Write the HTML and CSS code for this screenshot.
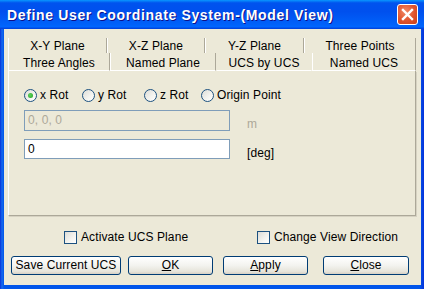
FILE: index.html
```html
<!DOCTYPE html>
<html lang="en">
<head>
  <meta charset="UTF-8" />
  <title>Define User Coordinate System</title>
  <link rel="stylesheet" href="styles.css">
</head>
<body>
  <div class="window">
    <div class="titlebar">
      <span class="title">Define User Coordinate System-(Model View)</span>
      <span class="close-x">
        <svg width="13" height="13" viewBox="0 0 13 13"><path d="M2 2 L11 11 M11 2 L2 11" stroke="#fff" stroke-width="2.4" stroke-linecap="square"/></svg>
      </span>
    </div>

    <div class="client">
      <!-- Onglets sur deux rangées -->
      <div class="tabs">
        <div class="tab-row back">
          <div class="tab">X-Y Plane</div>
          <div class="tab">X-Z Plane</div>
          <div class="tab">Y-Z Plane</div>
          <div class="tab">Three Points</div>
        </div>
        <div class="tab-row front">
          <div class="tab">Three Angles</div>
          <div class="tab">Named Plane</div>
          <div class="tab active">UCS by UCS</div>
          <div class="tab">Named UCS</div>
        </div>
      </div>

      <div class="tab-panel">
        <div class="radio-row">
          <label class="radio checked"><span class="circle"></span>x Rot</label>
          <label class="radio"><span class="circle"></span>y Rot</label>
          <label class="radio"><span class="circle"></span>z Rot</label>
          <label class="radio"><span class="circle"></span>Origin Point</label>
        </div>
        <div class="field-row first">
          <div class="textbox disabled">0, 0, 0</div>
          <span class="unit disabled">m</span>
        </div>
        <div class="field-row">
          <div class="textbox">0</div>
          <span class="unit">[deg]</span>
        </div>
      </div>

      <div class="check-row">
        <label class="check"><span class="box"></span>Activate UCS Plane</label>
        <label class="check"><span class="box"></span>Change View Direction</label>
      </div>

      <div class="button-row">
        <button class="btn btn-save">Save Current UCS</button>
        <button class="btn btn-ok"><u>O</u>K</button>
        <button class="btn btn-apply"><u>A</u>pply</button>
        <button class="btn btn-close"><u>C</u>lose</button>
      </div>
    </div>
  </div>
</body>
</html>
```

FILE: styles.css
```css
* {
  margin: 0;
  padding: 0;
  box-sizing: border-box;
}

body {
  background: #fff;
  font-family: 'Liberation Sans', Arial, sans-serif;
  font-size: 12px;
  letter-spacing: 0.1px;
  color: #000;
}

/* Fenêtre style XP */
.window {
  width: 424px;
  height: 289px;
  background: linear-gradient(to right, #0831d9 0, #166aee 2px, #0055ea 4px, #0055ea 420px, #0831d9 424px);
  display: flex;
  flex-direction: column;
}

.titlebar {
  height: 29px;
  display: flex;
  align-items: center;
  justify-content: space-between;
  padding: 0 6px 0 7px;
  background: linear-gradient(#0997ff 0, #0053ee 10%, #0050ee 40%, #0062fa 85%, #0066ff 92%, #003dd7 100%);
}

.title {
  color: #fff;
  font-weight: bold;
  font-size: 14px;
  letter-spacing: 0.65px;
  text-shadow: 1px 1px #0f1089;
}

.close-x {
  width: 21px;
  height: 21px;
  border: 1px solid #fff;
  border-radius: 3px;
  background: radial-gradient(circle at 40% 35%, #f08a68 0, #e0532c 55%, #c8401c 100%);
  display: flex;
  align-items: center;
  justify-content: center;
}

.client {
  flex: 1;
  margin: 0 3px 4px 4px;
  background: #ece9d8;
  padding: 8px 4px 0 4px;
  display: flex;
  flex-direction: column;
}

/* Onglets */
.tabs {
  width: 408px;
}

.tab-row {
  display: flex;
}

.tab-row.back {
  height: 16px;
  padding-top: 1px;
}

.tab-row.front {
  height: 18px;
}

.tab {
  display: flex;
  align-items: center;
  justify-content: center;
  border-left: 1px solid #fff;
  border-right: 1px solid #aca899;
  line-height: 14px;
}

.tab-row.back .tab:nth-child(1) { width: 99px; }
.tab-row.back .tab:nth-child(2) { width: 98px; }
.tab-row.back .tab:nth-child(3) { width: 99px; }
.tab-row.back .tab:nth-child(4) { width: 112px; }

.tab-row.front .tab:nth-child(1) { width: 102px; }
.tab-row.front .tab:nth-child(2) { width: 106px; }
.tab-row.front .tab:nth-child(3) { width: 96px; }
.tab-row.front .tab:nth-child(4) { width: 104px; }

.tab-row.front .tab {
  padding-top: 2px;
  border-bottom: 1px solid #fff;
}

.tab.active {
  border-left-color: #ece9d8;
  border-right-color: #ece9d8;
  border-bottom-color: #ece9d8;
}

.tab-panel {
  width: 408px;
  height: 145px;
  border-left: 1px solid #fff;
  border-right: 1px solid #aca899;
  border-bottom: 1px solid #aca899;
  box-shadow: 1px 1px 0 #d6d2c2;
  padding: 18px 0 0 15px;
}

/* Boutons radio */
.radio-row {
  display: flex;
  height: 13px;
  align-items: center;
}

.radio {
  display: flex;
  align-items: center;
  gap: 3px;
  line-height: 13px;
}

.radio:nth-child(1) { width: 58px; }
.radio:nth-child(2) { width: 62px; }
.radio:nth-child(3) { width: 57px; }

.circle {
  width: 13px;
  height: 13px;
  border: 1px solid #1c5180;
  border-radius: 50%;
  background: linear-gradient(135deg, #dcdcd7 0, #f4f4f0 60%, #fff 100%);
  display: flex;
  align-items: center;
  justify-content: center;
}

.radio.checked .circle::after {
  content: "";
  width: 5px;
  height: 5px;
  border-radius: 50%;
  background: radial-gradient(circle at 40% 40%, #5ed35e, #21a121);
}

/* Champs texte */
.field-row {
  display: flex;
  margin-top: 8px;
}

.textbox {
  width: 206px;
  height: 20px;
  border: 1px solid #7f9db9;
  background: #fff;
  padding: 2px 0 0 3px;
  line-height: 14px;
}

.field-row.first .textbox {
  height: 21px;
}

.textbox.disabled {
  background: #ece9d8;
  color: #aca899;
}

.unit {
  margin-left: 17px;
  padding-top: 7px;
  line-height: 14px;
}

.unit.disabled {
  color: #aca899;
}

/* Cases à cocher */
.check-row {
  display: grid;
  grid-template-columns: 249px 1fr;
  margin-top: 15px;
  height: 13px;
}

.check {
  display: flex;
  align-items: center;
  gap: 4px;
  line-height: 13px;
}

.check:first-child {
  padding-left: 56px;
}

.box {
  width: 13px;
  height: 13px;
  border: 1px solid #1c5180;
  background: linear-gradient(135deg, #dcdcd7 0, #f4f4f0 60%, #fff 100%);
}

/* Boutons */
.button-row {
  display: flex;
  margin-top: 12px;
  padding-left: 3px;
}

.btn {
  height: 19px;
  border: 1px solid #003c74;
  border-radius: 3px;
  background: linear-gradient(#fff 0, #f3f3ef 50%, #e6e4da 85%, #d6d0c5 100%);
  font-family: 'Liberation Sans', Arial, sans-serif;
  font-size: 12px;
  letter-spacing: 0.1px;
  color: #000;
  line-height: 15px;
}

.btn-save { width: 110px; }
.btn-ok { width: 85px; margin-left: 7px; }
.btn-apply { width: 85px; margin-left: 10px; }
.btn-close { width: 86px; margin-left: 15px; }
```
